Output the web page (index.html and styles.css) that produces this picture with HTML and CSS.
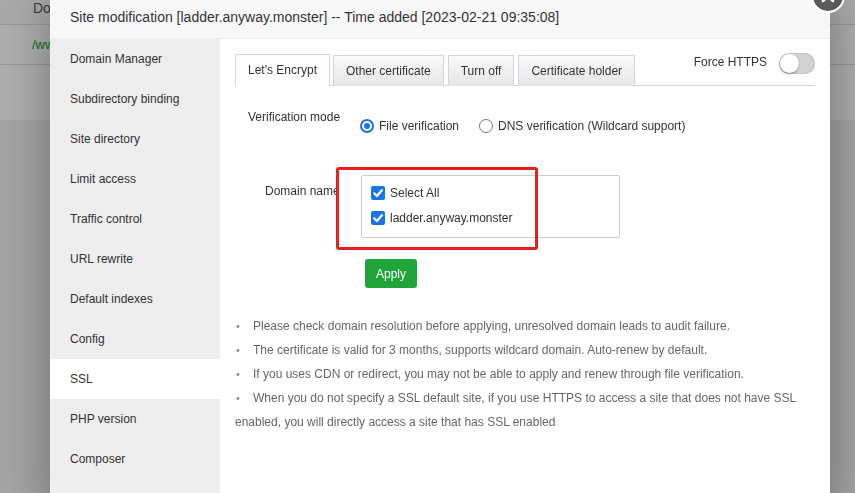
FILE: index.html
```html
<!DOCTYPE html>
<html>
<head>
<meta charset="utf-8">
<link rel="stylesheet" href="styles.css">
</head>
<body>
<div class="page">
  <div class="tbl-head"><span class="th">Doc</span></div>
  <div class="tbl-row"><span class="path">/ww</span></div>
  <div class="tbl-foot"></div>
</div>
<div class="shade"></div>
<div class="modal">
  <div class="modal-title">Site modification [ladder.anyway.monster] -- Time added [2023-02-21 09:35:08]</div>
  <div class="modal-body">
    <ul class="side">
      <li>Domain Manager</li>
      <li>Subdirectory binding</li>
      <li>Site directory</li>
      <li>Limit access</li>
      <li>Traffic control</li>
      <li>URL rewrite</li>
      <li>Default indexes</li>
      <li>Config</li>
      <li class="active">SSL</li>
      <li>PHP version</li>
      <li>Composer</li>
    </ul>
    <div class="content">
      <div class="tabs">
        <span class="tab on">Let's Encrypt</span>
        <span class="tab">Other certificate</span>
        <span class="tab">Turn off</span>
        <span class="tab">Certificate holder</span>
        <div class="force">
          <span class="force-label">Force HTTPS</span>
          <span class="switch"><span class="knob"></span></span>
        </div>
      </div>

      <div class="row row-mode">
        <span class="label">Verification mode</span>
        <div class="radios">
          <label class="radio"><span class="rb checked"></span>File verification</label>
          <label class="radio"><span class="rb"></span>DNS verification (Wildcard support)</label>
        </div>
      </div>

      <div class="row row-domain">
        <span class="label">Domain name</span>
        <div class="domain-box">
          <label class="check"><span class="cb"><svg viewBox="0 0 14 14" width="14" height="14"><path d="M3.2 7.3 L5.9 10 L10.9 4.2" fill="none" stroke="#fff" stroke-width="2.2" stroke-linecap="round" stroke-linejoin="round"/></svg></span>Select All</label>
          <label class="check"><span class="cb"><svg viewBox="0 0 14 14" width="14" height="14"><path d="M3.2 7.3 L5.9 10 L10.9 4.2" fill="none" stroke="#fff" stroke-width="2.2" stroke-linecap="round" stroke-linejoin="round"/></svg></span>ladder.anyway.monster</label>
        </div>
      </div>

      <button class="apply">Apply</button>

      <ul class="help">
        <li>Please check domain resolution before applying, unresolved domain leads to audit failure.</li>
        <li>The certificate is valid for 3 months, supports wildcard domain. Auto-renew by default.</li>
        <li>If you uses CDN or redirect, you may not be able to apply and renew through file verification.</li>
        <li>When you do not specify a SSL default site, if you use HTTPS to access a site that does not have SSL enabled, you will directly access a site that has SSL enabled</li>
      </ul>

      <div class="highlight"></div>
    </div>
  </div>
  <span class="close"><svg viewBox="0 0 30 30" width="30" height="30"><path d="M10 10 L20 20 M20 10 L10 20" stroke="#fff" stroke-width="2.6" stroke-linecap="round"/></svg></span>
</div>
</body>
</html>
```

FILE: styles.css
```css
* { box-sizing: border-box; }
html, body { margin: 0; padding: 0; }
body {
  width: 855px;
  height: 493px;
  overflow: hidden;
  background: #f2f2f2;
  font-family: "Liberation Sans", Arial, sans-serif;
}

/* background page */
.page { background: #fff; }
.tbl-head {
  height: 25px;
  border-bottom: 1px solid #ddd;
  background: #fafafa;
  padding-left: 33px;
  line-height: 16px;
  font-size: 14px;
  color: #555;
}
.tbl-row {
  height: 40px;
  border-bottom: 1px solid #ddd;
  padding-left: 32px;
  line-height: 40px;
  font-size: 13px;
}
.path { color: #1a9b36; }
.tbl-foot { height: 55px; background: #fff; }

.shade {
  position: fixed;
  inset: 0;
  background: rgba(0, 0, 0, 0.32);
}

/* modal */
.modal {
  position: fixed;
  left: 50px;
  top: -4px;
  width: 780px;
  height: 520px;
  background: #fff;
  box-shadow: 1px 1px 50px rgba(0, 0, 0, 0.35);
  display: flex;
  flex-direction: column;
}
.modal-title {
  height: 43px;
  line-height: 43px;
  padding-left: 20px;
  background: #f8f8f8;
  border-bottom: 1px solid #eee;
  font-size: 14px;
  color: #333;
}
.close {
  position: absolute;
  right: -13px;
  top: -15px;
  width: 30px;
  height: 30px;
  border-radius: 50%;
  background: #5a5a5a;
  box-shadow: 0 0 0 2px #fff;
}
.close svg { display: block; }

.modal-body {
  flex: 1;
  display: flex;
}
.side {
  list-style: none;
  margin: 0;
  padding: 0;
  width: 170px;
  background: #eee;
}
.side li {
  height: 40px;
  line-height: 40px;
  padding-left: 20px;
  font-size: 12px;
  color: #333;
}
.side li.active { background: #fff; }

.content {
  position: relative;
  flex: 1;
  padding: 16px 15px 0 15px;
}

/* tabs */
.tabs {
  display: flex;
  align-items: flex-end;
  height: 31px;
  border-bottom: 1px solid #d4d2e4;
}
.tab {
  height: 31px;
  line-height: 30px;
  padding: 0 12px;
  margin-right: 3px;
  font-size: 12px;
  color: #333;
  border: 1px solid #d4d2e4;
  border-bottom: none;
  background: linear-gradient(#fafafa, #e6e6e6);
  margin-bottom: -1px;
}
.tab.on {
  background: #fff;
  height: 32px;
}
.tab:nth-child(2) { margin-right: 4px; }
.tab:nth-child(3) { margin-right: 4px; }
.force {
  margin-left: auto;
  align-self: stretch;
  display: flex;
  align-items: flex-start;
}
.force-label {
  font-size: 12px;
  color: #333;
  line-height: 14px;
  margin-right: 12px;
}
.switch {
  position: relative;
  display: block;
  width: 36px;
  height: 21px;
  margin-top: -2px;
  border-radius: 11px;
  background: #d2d2d2;
  box-shadow: inset 0 0 0 1px #c4c4c4;
}
.knob {
  position: absolute;
  left: 1px;
  top: 1px;
  width: 19px;
  height: 19px;
  border-radius: 50%;
  background: #fff;
  box-shadow: 0 1px 2px rgba(0, 0, 0, 0.35);
}

/* form rows */
.row {
  display: flex;
  align-items: flex-start;
  font-size: 12px;
  color: #333;
}
.label {
  line-height: 24px;
  white-space: nowrap;
  flex: none;
}
.row-mode { margin-top: 19px; }
.row-mode .label { width: 125px; padding-left: 13px; }
.radios {
  display: flex;
  margin-top: 9px;
  line-height: 24px;
}
.radio {
  display: flex;
  align-items: center;
  margin-right: 20px;
  white-space: nowrap;
}
.rb {
  width: 14px;
  height: 14px;
  border-radius: 50%;
  border: 1px solid #767676;
  background: #fff;
  margin-right: 5px;
  position: relative;
}
.rb.checked {
  border: 2px solid #1a73e8;
}
.rb.checked::after {
  content: "";
  position: absolute;
  left: 2px;
  top: 2px;
  width: 6px;
  height: 6px;
  border-radius: 50%;
  background: #1a73e8;
}

.row-domain { margin-top: 37px; }
.row-domain .label { margin-top: 4px; padding-left: 30px; width: 126px; }
.domain-box {
  width: 259px;
  height: 63px;
  border: 1px solid #ccc;
  border-radius: 2px;
  padding: 5px 9px 0 9px;
}
.check {
  display: flex;
  align-items: center;
  height: 24px;
  margin-bottom: 1px;
  font-size: 12px;
  color: #333;
}
.cb {
  width: 14px;
  height: 14px;
  border-radius: 2px;
  background: #1a73e8;
  margin-right: 5px;
  display: block;
}
.cb svg { display: block; }

.apply {
  display: block;
  margin: 21px 0 0 130px;
  width: 52px;
  height: 29px;
  border: none;
  border-radius: 3px;
  background: #20a53a;
  color: #fff;
  font-family: "Liberation Sans", Arial, sans-serif;
  font-size: 12px;
  padding: 0;
}

.help {
  list-style: none;
  margin: 26px 0 0 0;
  padding: 0;
  font-size: 12px;
  color: #666;
  line-height: 24px;
}
.help li::before {
  content: "\2022";
  display: inline-block;
  width: 17px;
  padding-left: 1px;
  color: #888;
  font-size: 11px;
}

.highlight {
  position: absolute;
  left: 116px;
  top: 128px;
  width: 202px;
  height: 83px;
  border: 3px solid #e3201e;
  border-radius: 3px;
}
```
